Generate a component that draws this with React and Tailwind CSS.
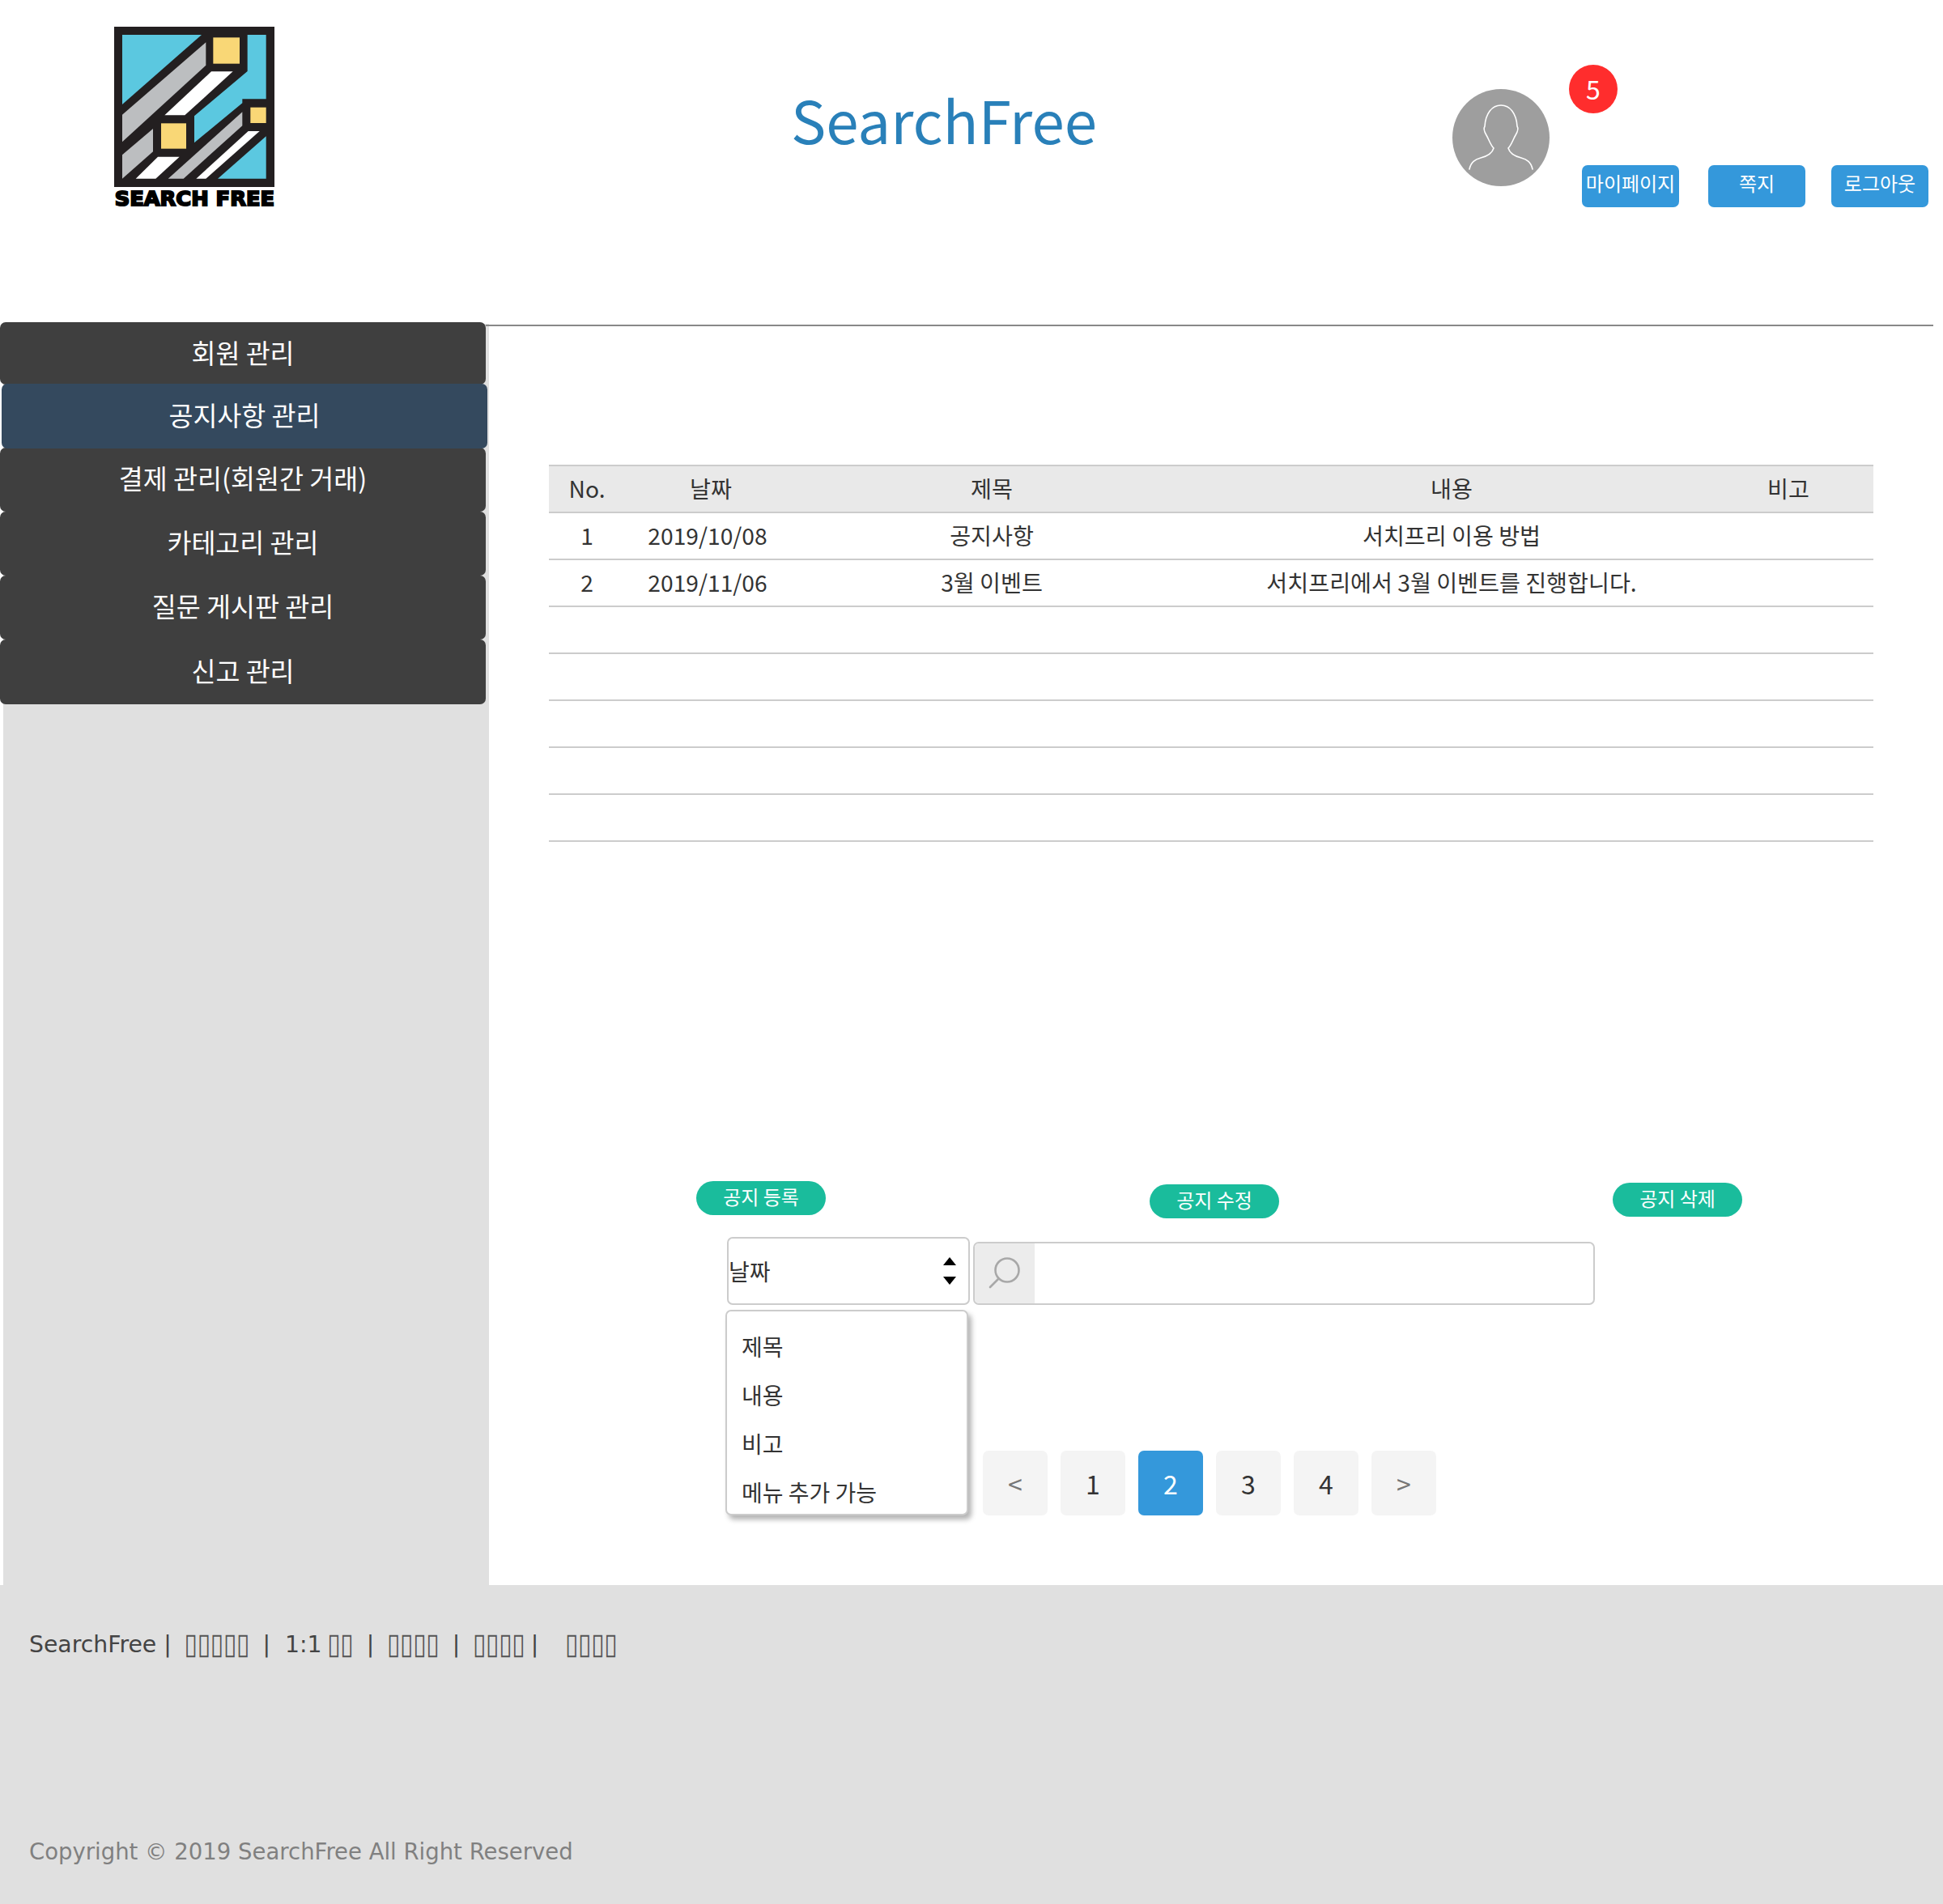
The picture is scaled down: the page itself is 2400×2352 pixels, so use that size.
const CJK = "font-['Noto_Sans_CJK_KR','Noto_Sans',sans-serif]";

const MENU = [
  { label: "회원 관리", size: "h-[77px] pb-[2px] bg-[#3f3f3f]" },
  { label: "공지사항 관리", size: "relative h-[80px] ml-[2px] -my-px pb-[4px] bg-[#34495e]" },
  { label: "결제 관리(회원간 거래)", size: "h-[79px] pb-[4px] bg-[#3f3f3f]" },
  { label: "카테고리 관리", size: "h-[79px] pb-[4px] bg-[#3f3f3f]" },
  { label: "질문 게시판 관리", size: "h-[79px] pb-[4px] bg-[#3f3f3f]" },
  { label: "신고 관리", size: "h-[80px] pb-[4px] bg-[#3f3f3f]" },
];

const COLS = ["w-[94px]", "w-[208px] pl-[4px]", "w-[490px]", "w-[646px]", "w-[198px] pr-[12px]"];
const CELLS = ["", "pr-[4px]", "", "", "pr-[12px]"];

const ROWS = [
  ["1", "2019/10/08", "공지사항", "서치프리 이용 방법", ""],
  ["2", "2019/11/06", "3월 이벤트", "서치프리에서 3월 이벤트를 진행합니다.", ""],
  [],
  [],
  [],
  [],
  [],
];

function Logo() {
  return (
    <svg width="202" height="224" viewBox="120 97 606 672">
      <rect x="123" y="97" width="594" height="594" fill="#231f20" />
      <g fill="#5bc8e0">
        <polygon points="153,127 447,127 153,385" />
        <polygon points="617,127 686,127 686,365 598,365 598,380 420,527 420,428 617,262" />
        <polygon points="686,503 686,660 507,660" />
      </g>
      <g fill="#f9d776">
        <rect x="490" y="137" width="98" height="97" />
        <rect x="297" y="455" width="93" height="94" />
        <rect x="628" y="396" width="58" height="58" />
      </g>
      <g fill="#bcbec0">
        <polygon points="463,155 463,240 153,524 153,423" />
        <polygon points="267,475 267,560 153,660 153,572" />
        <polygon points="598,413 598,464 380,660 323,660" />
      </g>
      <g fill="#fff">
        <polygon points="483,263 563,263 385,425 310,425" />
        <polygon points="285,579 365,579 277,660 203,660" />
        <polygon points="620,484 662,484 463,660 427,660" />
      </g>
      <text
        x="125"
        y="760"
        textLength="592"
        lengthAdjust="spacingAndGlyphs"
        fontFamily="DejaVu Sans"
        fontWeight="bold"
        fontSize="76"
        stroke="#000"
        strokeWidth="6"
      >
        SEARCH FREE
      </text>
    </svg>
  );
}

function Avatar() {
  return (
    <svg width="120" height="120" viewBox="0 0 120 120">
      <circle cx="60" cy="60" r="60" fill="#9e9e9e" />
      <path
        d="M21 99C23 90 28 87 35 85C43 83 49 80 51 73C47 69 45 62 42 57C39 52 38 49 40 46C41 30 49 20 60 20C71 20 79 30 80 46C82 49 81 52 78 57C75 62 73 69 69 73C71 80 77 83 85 85C92 87 97 90 99 99"
        fill="none"
        stroke="#fff"
        strokeWidth="1.6"
        strokeLinecap="round"
      />
    </svg>
  );
}

function HeaderButton({ label, className }) {
  return (
    <div className={`w-[120px] h-[52px] rounded-[7px] bg-[#3498db] text-white text-[24px] leading-[44px] text-center whitespace-nowrap ${className}`}>
      {label}
    </div>
  );
}

function GreenButton({ label, className }) {
  return (
    <div className={`w-[160px] h-[42px] rounded-full bg-[#1abc9c] text-white text-[24px] leading-[38px] text-center ${className}`}>
      {label}
    </div>
  );
}

function PageButton({ label, active, muted }) {
  return (
    <div
      className={`w-[80px] h-[80px] rounded-[7px] flex items-center justify-center text-[32px] ${
        active ? "bg-[#3498db] text-white" : muted ? "bg-[#f4f4f4] text-[#777]" : "bg-[#f4f4f4] text-[#333]"
      }`}
    >
      {label}
    </div>
  );
}

function Tofu({ text, className = "-mx-[2px]" }) {
  return <span className={`inline-block align-[1.5px] text-[29.3px] leading-[30px] scale-y-[1.25] text-[#555] ${className}`}>{text}</span>;
}

export default function App() {
  return (
    <div className={`w-[2400px] h-[2352px] bg-white overflow-hidden text-[#333] ${CJK}`}>
      <header className="h-[400px] flex items-start">
        <div className="ml-[140px] mt-[33px] w-[202px]">
          <Logo />
        </div>
        <div className="ml-[635px] mt-[94px] w-[817px] text-[72.6px] leading-[106px] text-[#2980b9]">SearchFree</div>
        <div className="mt-[110px]">
          <Avatar />
        </div>
        <div className="relative ml-[40px] mt-[204px] flex">
          <div className="absolute left-[-16px] top-[-124px] w-[60px] h-[60px] pb-[2px] rounded-full bg-[#ff2d2d] text-white text-[32px] flex items-center justify-center">
            5
          </div>
          <HeaderButton label="마이페이지" />
          <HeaderButton label="쪽지" className="ml-[36px]" />
          <HeaderButton label="로그아웃" className="ml-[32px]" />
        </div>
      </header>

      <main className="h-[1558px] flex">
        <aside className="ml-[4px] w-[600px] bg-[#e0e0e0]">
          <nav className="-ml-[4px] -mt-[2px] w-[600px] flex flex-col">
            {MENU.map((item) => (
              <div
                key={item.label}
                className={`w-[600px] rounded-[7px] text-white text-[32.6px] flex items-center justify-center ${item.size}`}
              >
                {item.label}
              </div>
            ))}
          </nav>
        </aside>

        <section className="flex-1">
          <div className="mt-[1px] -ml-[4px] w-[1788px] h-[2px] bg-[#888]" />

          <table className="ml-[74px] mt-[171px] w-[1636px] table-fixed border-collapse text-[28.2px]">
            <thead>
              <tr className="h-[58px] bg-[#e9e9e9] border-y-2 border-[#ccc]">
                {["No.", "날짜", "제목", "내용", "비고"].map((title, i) => (
                  <th key={title} className={`font-normal pb-[2px] ${COLS[i]}`}>
                    {title}
                  </th>
                ))}
              </tr>
            </thead>
            <tbody>
              {ROWS.map((row, i) => (
                <tr key={i} className="h-[58px] border-b-2 border-[#ccc]">
                  {[0, 1, 2, 3, 4].map((c) => (
                    <td key={c} className={`text-center pb-[2px] ${CELLS[c]}`}>
                      {row[c]}
                    </td>
                  ))}
                </tr>
              ))}
            </tbody>
          </table>

          <div className="ml-[256px] mt-[419px] h-[46px] flex items-start">
            <GreenButton label="공지 등록" />
            <GreenButton label="공지 수정" className="ml-[400px] mt-[4px]" />
            <GreenButton label="공지 삭제" className="ml-[412px] mt-[2px]" />
          </div>

          <div className="relative ml-[294px] mt-[23px] flex items-start">
            <div className="w-[300px] h-[84px] border-2 border-[#ccc] rounded-[7px] flex items-center justify-between pr-[14px] text-[28px]">
              <span className="leading-none">날짜</span>
              <svg width="18" height="38" viewBox="0 0 18 38">
                <path d="M9 2L17 12H1Z" fill="#000" />
                <path d="M9 36L1 26H17Z" fill="#000" />
              </svg>
            </div>
            <div className="ml-[4px] mt-[6px] w-[768px] h-[78px] border-2 border-[#ccc] rounded-[7px] flex overflow-hidden">
              <div className="w-[74px] bg-[#ececec] flex items-center justify-center">
                <svg width="42" height="42" viewBox="0 0 42 42" fill="none" stroke="#a8a8a8" strokeWidth="2.6" strokeLinecap="round">
                  <circle cx="24" cy="17" r="14.5" />
                  <path d="M13 28L3 38" />
                </svg>
              </div>
            </div>

            <ul className="absolute left-[-2px] top-[90px] w-[300px] h-[254px] bg-white border-2 border-[#ccc] rounded-[7px] shadow-[4px_5px_6px_rgba(0,0,0,0.3)] pt-[13px] pl-[18px] text-[28px]">
              {["제목", "내용", "비고", "메뉴 추가 가능"].map((label) => (
                <li key={label} className="h-[60px] leading-[60px]">
                  {label}
                </li>
              ))}
            </ul>
          </div>

          <div className="ml-[610px] mt-[180px] flex gap-[16px]">
            <PageButton label="<" muted />
            <PageButton label="1" />
            <PageButton label="2" active />
            <PageButton label="3" />
            <PageButton label="4" />
            <PageButton label=">" muted />
          </div>
        </section>
      </main>

      <footer className="h-[394px] bg-[#e0e0e0] pl-[36px] font-['DejaVu_Sans',sans-serif] whitespace-pre">
        <div className="pt-[55px] text-[28.3px] leading-[38px] text-[#444]">
          SearchFree |  <Tofu text="▯▯▯▯▯" />  |  1:1 <Tofu text="▯▯" />  |  <Tofu text="▯▯▯▯" />  |  <Tofu text="▯▯▯▯" /> |   <Tofu text="▯▯▯▯" className="ml-[6px]" />
        </div>
        <div className="mt-[217px] text-[27.5px] leading-[38px] text-[#808080]">Copyright © 2019 SearchFree All Right Reserved</div>
      </footer>
    </div>
  );
}
